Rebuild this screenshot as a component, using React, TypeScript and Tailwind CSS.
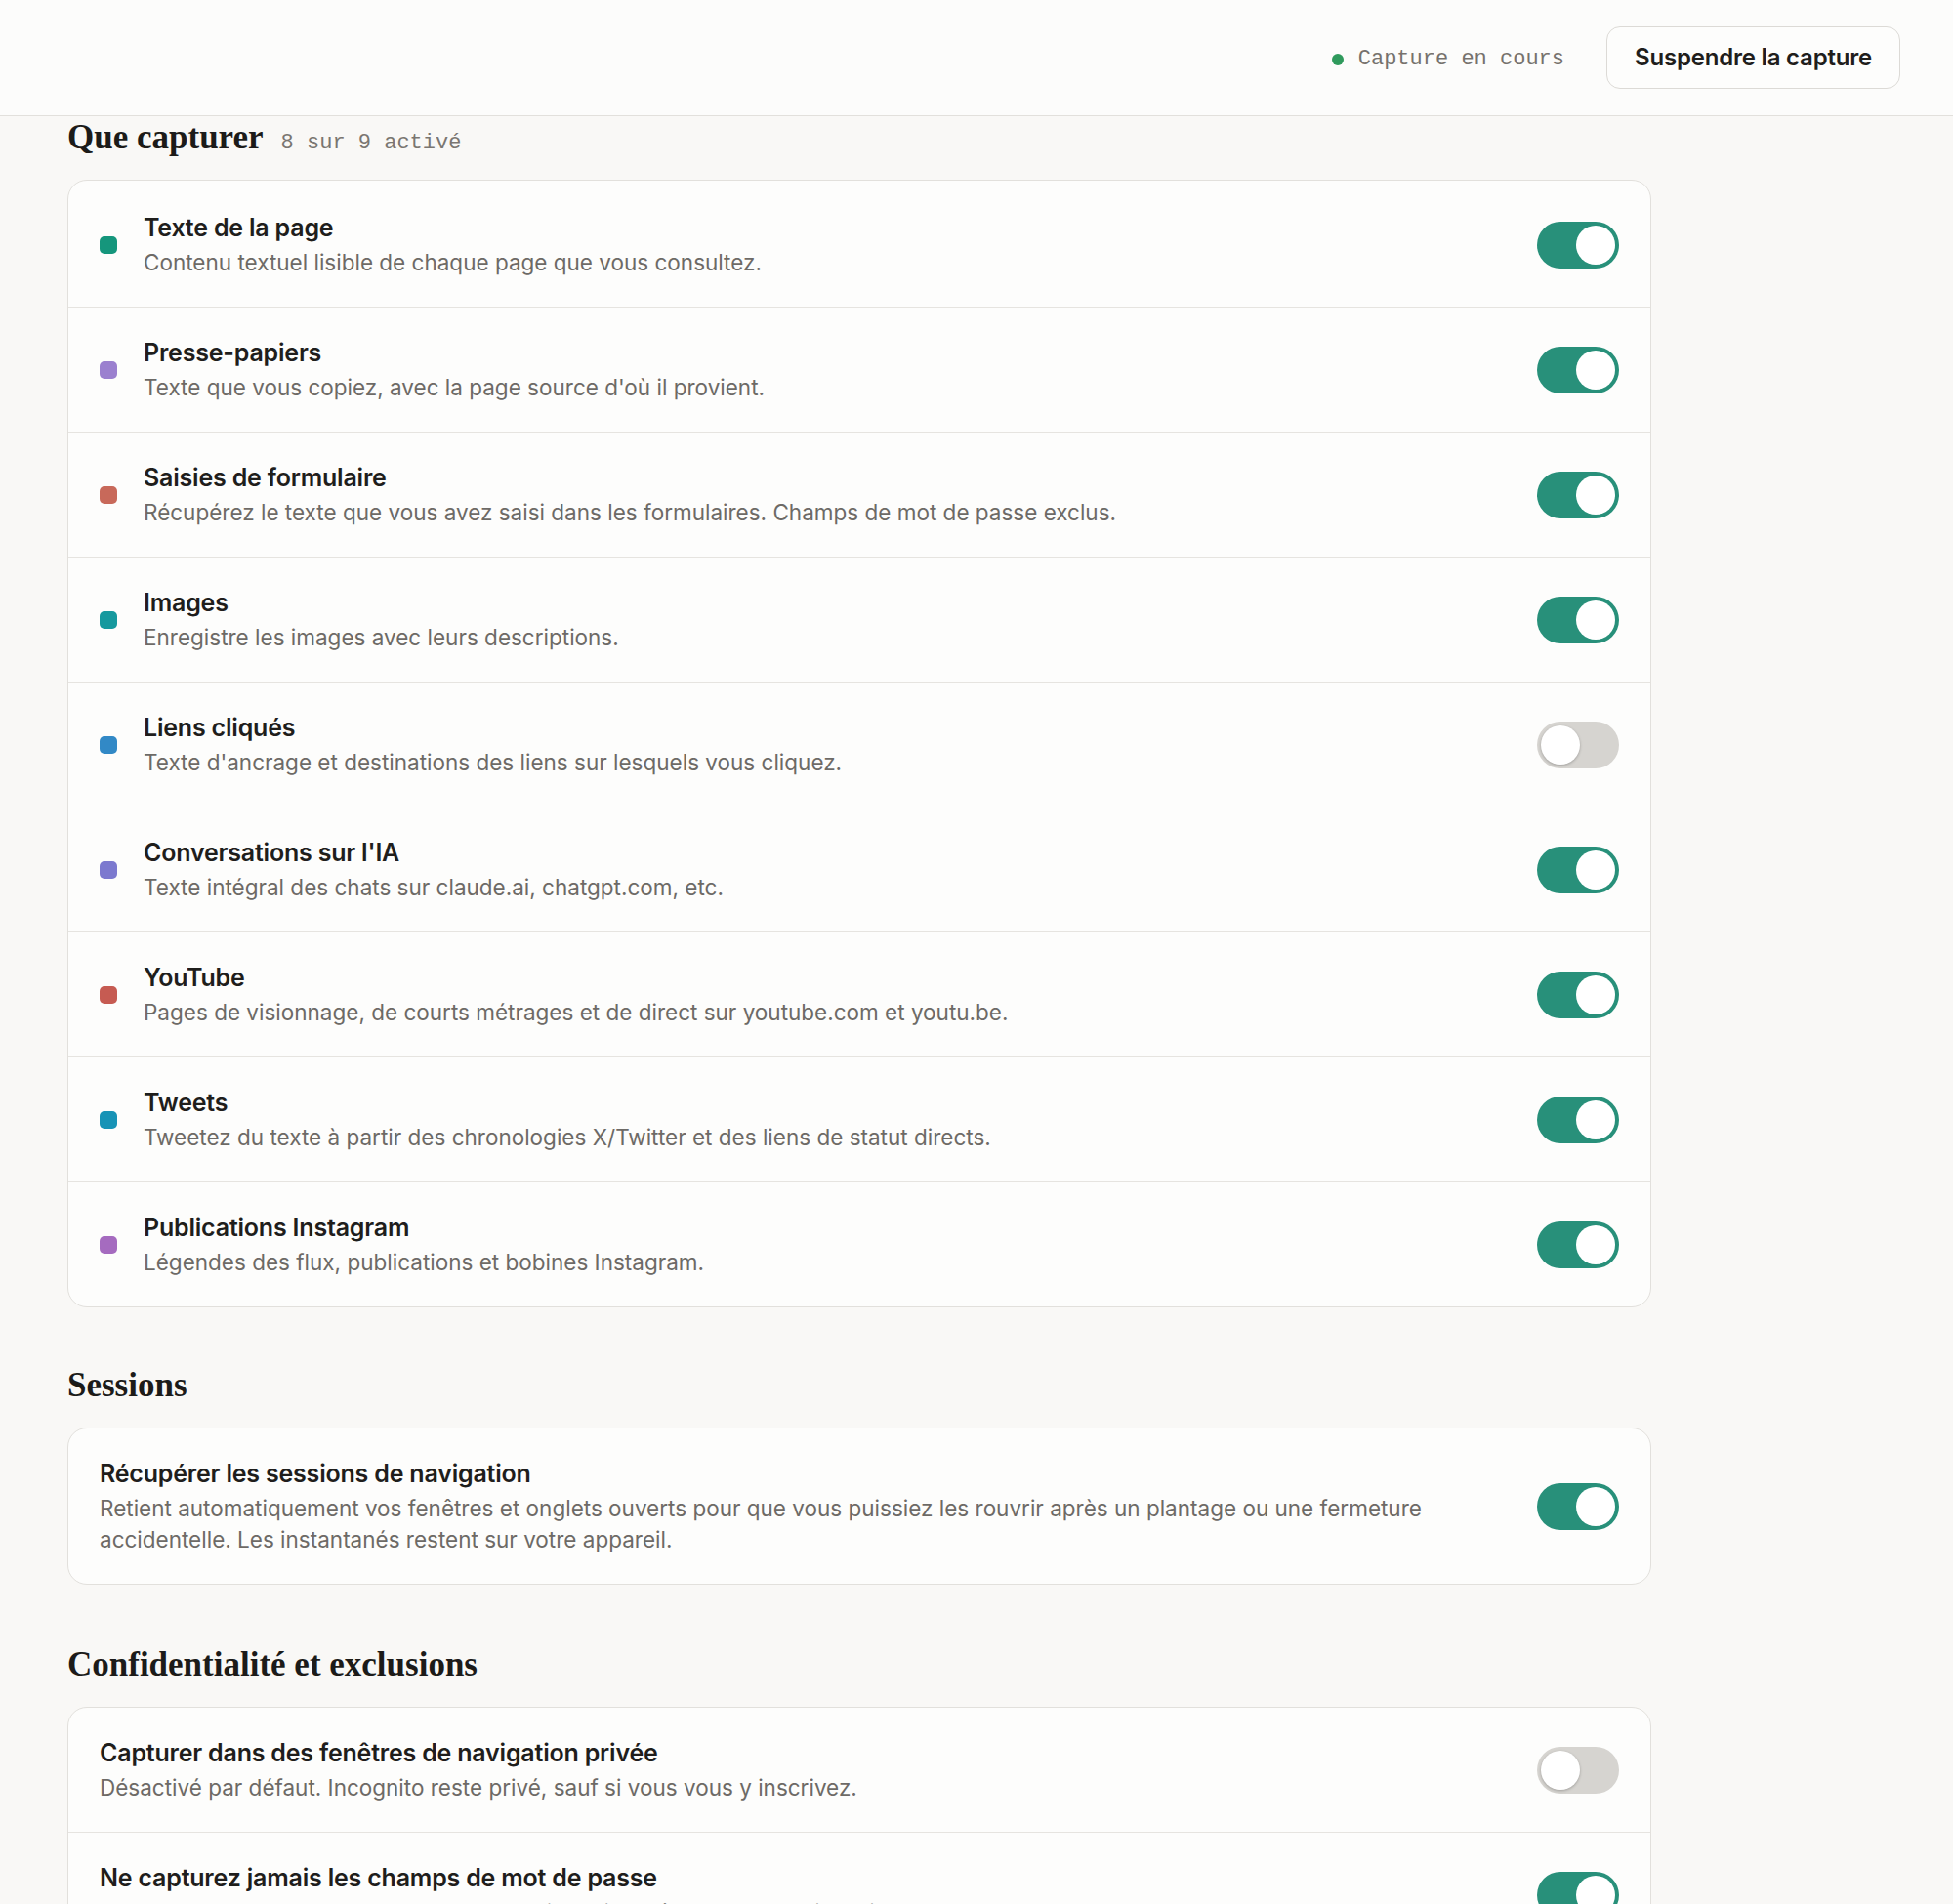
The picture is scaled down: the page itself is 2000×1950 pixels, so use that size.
import React from "react";

type Item = {
  title: string;
  desc: string;
  color?: string;
  on: boolean;
};

const captureItems: Item[] = [
  {
    title: "Texte de la page",
    desc: "Contenu textuel lisible de chaque page que vous consultez.",
    color: "bg-[#15967c]",
    on: true,
  },
  {
    title: "Presse-papiers",
    desc: "Texte que vous copiez, avec la page source d'où il provient.",
    color: "bg-[#9b80cf]",
    on: true,
  },
  {
    title: "Saisies de formulaire",
    desc: "Récupérez le texte que vous avez saisi dans les formulaires. Champs de mot de passe exclus.",
    color: "bg-[#c8695a]",
    on: true,
  },
  {
    title: "Images",
    desc: "Enregistre les images avec leurs descriptions.",
    color: "bg-[#16999e]",
    on: true,
  },
  {
    title: "Liens cliqués",
    desc: "Texte d'ancrage et destinations des liens sur lesquels vous cliquez.",
    color: "bg-[#3289c6]",
    on: false,
  },
  {
    title: "Conversations sur l'IA",
    desc: "Texte intégral des chats sur claude.ai, chatgpt.com, etc.",
    color: "bg-[#7c79cf]",
    on: true,
  },
  {
    title: "YouTube",
    desc: "Pages de visionnage, de courts métrages et de direct sur youtube.com et youtu.be.",
    color: "bg-[#c65b52]",
    on: true,
  },
  {
    title: "Tweets",
    desc: "Tweetez du texte à partir des chronologies X/Twitter et des liens de statut directs.",
    color: "bg-[#1793b6]",
    on: true,
  },
  {
    title: "Publications Instagram",
    desc: "Légendes des flux, publications et bobines Instagram.",
    color: "bg-[#a56bbf]",
    on: true,
  },
];

const privacyItems: Item[] = [
  {
    title: "Capturer dans des fenêtres de navigation privée",
    desc: "Désactivé par défaut. Incognito reste privé, sauf si vous vous y inscrivez.",
    on: false,
  },
  {
    title: "Ne capturez jamais les champs de mot de passe",
    desc: "Les champs de type mot de passe sont toujours ignorés, quel que soit le site.",
    on: true,
  },
];

const Toggle = ({ on }: { on: boolean }) => (
  <div
    className={`w-[84px] h-[48px] shrink-0 rounded-full p-[4px] flex ${
      on ? "bg-[#28907a] justify-end" : "bg-[#d6d4d0] justify-start"
    }`}
  >
    <div
      className={`w-[40px] h-[40px] rounded-full bg-white ${
        on ? "" : "shadow-[0_1px_3px_rgba(0,0,0,0.25)]"
      }`}
    />
  </div>
);

const Row = ({ item }: { item: Item }) => (
  <div className="flex items-center px-[32px] py-[29px] border-b border-[#e6e4e0] last:border-b-0">
    {item.color && (
      <div className={`w-[18px] h-[18px] rounded-[5px] shrink-0 mr-[27px] ${item.color}`} />
    )}
    <div className="flex-1 pr-[48px]">
      <h6 className="text-[25px] leading-[34px] font-semibold text-[#1f1e1c] tracking-[-0.2px]">
        {item.title}
      </h6>
      <p className="mt-[3px] text-[22.5px] leading-[32px] text-[#6d6a66]">
        {item.desc}
      </p>
    </div>
    <Toggle on={item.on} />
  </div>
);

const SectionTitle = ({ children, extra }: { children: React.ReactNode; extra?: string }) => (
  <div className="flex items-baseline gap-[18px] h-[40px] pt-[2px]">
    <h2 className="font-['Liberation_Serif',serif] font-bold text-[35px] leading-[40px] text-[#1c1b19]">
      {children}
    </h2>
    {extra && (
      <span className="font-['Liberation_Mono',monospace] text-[22px] leading-[30px] text-[#7a7671]">
        {extra}
      </span>
    )}
  </div>
);

const Card = ({ children, className = "" }: { children: React.ReactNode; className?: string }) => (
  <div className={`mt-[25px] rounded-[20px] border border-[#e2e0dc] bg-[#fdfdfc] ${className}`}>
    {children}
  </div>
);

export default function App() {
  return (
    <div className="h-[1950px] overflow-hidden bg-[#f9f8f6] font-['Inter',sans-serif]">
      <header className="h-[119px] border-b border-[#e2e0dc] bg-[#fcfcfb] flex items-center justify-end pr-[54px]">
        <div className="flex items-center gap-[15px] mt-[3px]">
          <span className="w-[12px] h-[12px] rounded-full bg-[#2f9a5c]" />
          <span className="font-['Liberation_Mono',monospace] text-[22px] text-[#76726d]">
            Capture en cours
          </span>
        </div>
        <button
          type="button"
          className="ml-[43px] h-[64px] px-[28px] rounded-[14px] border border-[#dcdad6] bg-[#fdfdfc] text-[24px] font-semibold text-[#1f1e1c] tracking-[-0.2px]"
        >
          Suspendre la capture
        </button>
      </header>

      <main className="pl-[69px]">
        <section className="w-[1622px]">
          <SectionTitle extra="8 sur 9 activé">Que capturer</SectionTitle>
          <Card className="pt-[2px]">
            {captureItems.map((item) => (
              <Row key={item.title} item={item} />
            ))}
          </Card>
        </section>

        <section className="w-[1622px] mt-[58px]">
          <SectionTitle>Sessions</SectionTitle>
          <Card>
            <Row
              item={{
                title: "Récupérer les sessions de navigation",
                desc: "Retient automatiquement vos fenêtres et onglets ouverts pour que vous puissiez les rouvrir après un plantage ou une fermeture accidentelle. Les instantanés restent sur votre appareil.",
                on: true,
              }}
            />
          </Card>
        </section>

        <section className="w-[1622px] mt-[60px]">
          <SectionTitle>Confidentialité et exclusions</SectionTitle>
          <Card>
            {privacyItems.map((item) => (
              <Row key={item.title} item={item} />
            ))}
          </Card>
        </section>
      </main>
    </div>
  );
}
